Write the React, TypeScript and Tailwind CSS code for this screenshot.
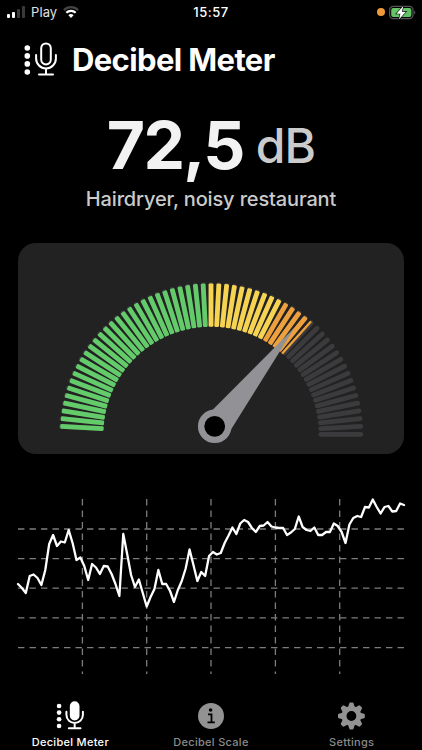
import React from 'react';

const TICK_COUNT = 60;
const LEVEL = 72.5;

const history = [
  584, 588, 593, 576, 574.5, 578, 585, 570, 544, 535, 546, 541.5, 542.5, 530, 543, 560, 557.5, 566, 580, 564,
  567.5, 574, 566, 566.5, 574, 584, 596, 534, 554, 575, 587, 579.5, 593, 606.5, 597, 589, 570, 584, 584, 591,
  602, 590, 581, 568.5, 549.5, 565, 581, 572, 576, 556, 552, 554.5, 553, 543, 535.5, 527.5, 534, 523.5, 520, 522,
  528, 532, 526, 525.5, 522, 526.5, 527.5, 528, 528, 535, 532.5, 529, 516.5, 527, 530, 531, 527.5, 535, 535, 532,
  532, 523.5, 526, 532, 543, 524.5, 518, 516, 517, 507, 507.5, 499.5, 507, 513.5, 507, 506, 511.5, 511, 503.5, 505,
];

const tickColor = (index: number) => {
  if (index < 29) return '#63cb6a';
  if (index < 39) return '#f6d451';
  return '#eda03c';
};

const MicIcon = ({ className, filled = false }: { className?: string; filled?: boolean }) => (
  <svg viewBox="0 0 34 36" fill="none" className={className}>
    {[6, 13.9, 21.9, 30].map((cy) => (
      <circle key={cy} cx="3.3" cy={cy} r="2.8" fill="white" />
    ))}
    <rect x="17.2" y="1.4" width="9.6" height="21" rx="4.8" stroke="white" strokeWidth="2" fill={filled ? 'white' : 'none'} />
    <path d="M12.1 13v3.5a9.9 9.9 0 0 0 19.8 0V13M22 26.5v6M15 32.6h14" stroke="white" strokeWidth={filled ? 2.4 : 2} strokeLinecap="round" />
  </svg>
);

const StatusBar = () => (
  <div className="grid h-6 grid-cols-3 items-center px-[7px] text-[13px] text-white">
    <div className="flex items-center gap-[6px]">
      <div className="flex h-[12px] items-end gap-[2px]">
        <span className="h-[4px] w-[3px] rounded-[1px] bg-white" />
        <span className="h-[6px] w-[3px] rounded-[1px] bg-white" />
        <span className="h-[9px] w-[3px] rounded-[1px] bg-[#3a3a3a]" />
        <span className="h-[12px] w-[3px] rounded-[1px] bg-[#3a3a3a]" />
      </div>
      <span className="pt-px tracking-[0.1px] text-[#e0e0e0]">Play</span>
      <svg viewBox="0 0 16 12" className="h-[12px] w-[16px]" fill="none">
        <path d="M.9 4.1a10.2 10.2 0 0 1 14.2 0" stroke="#444" strokeWidth="2.2" />
        <path d="M3.3 6.8a6.7 6.7 0 0 1 9.4 0" stroke="white" strokeWidth="2.2" />
        <path d="M8 12 5.4 9.3a3.8 3.8 0 0 1 5.2 0z" fill="white" />
      </svg>
    </div>
    <span className="pt-px text-center font-medium tracking-[0.5px]">15:57</span>
    <div className="-mr-px flex items-center justify-end gap-[4px]">
      <span className="h-[8px] w-[8px] rounded-full bg-[#f09a37]" />
      <svg viewBox="0 0 27 15" className="h-[15px] w-[27px]" fill="none">
        <rect x=".6" y="1.3" width="23.4" height="12.4" rx="3.6" stroke="#555" strokeWidth="1.2" />
        <rect x="2.2" y="2.9" width="20.2" height="9.2" rx="2" fill="#63c466" />
        <path d="M25.2 5.5v4c1.6-.6 1.6-3.4 0-4z" fill="#555" />
        <path d="m14.4.8-7 7.9h4l-1.5 5.9 7-7.9h-4z" fill="white" stroke="black" strokeWidth="1.2" paintOrder="stroke" />
      </svg>
    </div>
  </div>
);

const Gauge = () => {
  const filledTicks = (LEVEL / 100) * TICK_COUNT;

  return (
    <svg viewBox="0 0 386 211" className="h-[211px] w-[386px]">
      <g transform="translate(193 191.3)">
        {Array.from({ length: TICK_COUNT }, (_, i) => {
          const fill = Math.min(1, Math.max(0, filledTicks - i));
          return (
            <g key={i} transform={`rotate(${(i + 1) * 3 - 90})`}>
              <rect x="-2.4" y="-152.3" width="4.8" height="44.8" rx="2.4" fill="#3b3b3d" />
              {fill > 0 && (
                <rect x="-2.4" y="-150.9" width={4.8 * fill} height="43.4" rx={fill < 1 ? 0.5 : 1.2} fill={tickColor(i)} />
              )}
            </g>
          );
        })}
      </g>
      {/* needle */}
      <path d="M190 171.5 277 84 210.8 190z" fill="#919196" />
      <circle cx="196.7" cy="183.3" r="13.6" fill="black" stroke="#919196" strokeWidth="6.4" />
    </svg>
  );
};

const HistoryChart = () => {
  const step = 386 / (history.length - 1);
  const points = history.map((y, i) => `${(i * step).toFixed(2)},${y - 490}`).join(' ');

  return (
    <svg viewBox="0 0 386 190" className="h-[190px] w-[386px] overflow-visible" fill="none">
      <g stroke="#7d7d7d" strokeWidth="1.3" strokeDasharray="6.4 5.1">
        {[39, 68.6, 98.2, 127.9, 157.6].map((y) => (
          <path key={y} d={`M0 ${y}H386`} />
        ))}
        {[64.4, 128.7, 193, 257.4, 321.7].map((x) => (
          <path key={x} d={`M${x} 9V184`} />
        ))}
      </g>
      <polyline points={points} stroke="white" strokeWidth="2.3" strokeLinejoin="round" strokeLinecap="round" />
    </svg>
  );
};

const TabBar = () => (
  <nav className="grid grid-cols-3 text-[11px] font-medium tracking-[0.3px] text-[#8a8a8a]">
    <div className="flex flex-col items-center text-white">
      <MicIcon filled className="h-[30px] w-[29px]" />
      <span className="mt-[3px] leading-4">Decibel Meter</span>
    </div>
    <div className="flex flex-col items-center">
      <svg viewBox="0 0 28 30" className="h-[30px] w-[28px]">
        <circle cx="14" cy="15" r="13" fill="#929292" />
        <circle cx="13.6" cy="9" r="1.8" fill="black" />
        <path d="M11 13.3h3.5v7.8M10.5 21.4h7.3" fill="none" stroke="black" strokeWidth="1.8" />
      </svg>
      <span className="mt-[3px] leading-4">Decibel Scale</span>
    </div>
    <div className="flex flex-col items-center">
      <svg viewBox="0 0 28 30" className="h-[30px] w-[28px]">
        <g transform="translate(13.4 15)" fill="#929292">
          {[0, 45, 90, 135, 180, 225, 270, 315].map((angle) => (
            <path key={angle} d="M-3.6-8-2.2-12.6Q-2-13.4-1.2-13.4H1.2Q2-13.4 2.2-12.6L3.6-8z" transform={`rotate(${angle})`} />
          ))}
          <circle r="7.4" fill="none" stroke="#929292" strokeWidth="5" />
        </g>
      </svg>
      <span className="mt-[3px] leading-4">Settings</span>
    </div>
  </nav>
);

const App: React.FC = () => {
  return (
    <div className="flex h-[750px] w-[422px] flex-col overflow-hidden bg-black font-['Inter',sans-serif]">
      <StatusBar />
      <header className="flex items-center gap-[14px] pt-[18px] pl-[24px]">
        <MicIcon className="h-[36px] w-[34px]" />
        <h1 className="text-[31px] leading-9 font-bold tracking-[-0.62px] text-white">Decibel Meter</h1>
      </header>
      <div className="mt-[31px] flex h-[72px] items-center justify-center gap-[12px]">
        <span className="text-[66px] leading-none font-bold tracking-[-1.7px] text-[#f2f2f2]">72,5</span>
        <span className="pt-[2px] text-[48px] leading-none font-medium tracking-[-0.8px] text-[#cbcbcb]">dB</span>
      </div>
      <p className="mt-[6px] text-center text-[20px] leading-6 font-medium tracking-[-0.15px] text-[#cbcbcb]">
        Hairdryer, noisy restaurant
      </p>
      <div className="mx-[18px] mt-[32px] h-[211px] overflow-hidden rounded-[18px] bg-[#222222]">
        <Gauge />
      </div>
      <div className="mt-[36px] px-[18px]">
        <HistoryChart />
      </div>
      <div className="mt-[21px]">
        <TabBar />
      </div>
    </div>
  );
};

export default App;
